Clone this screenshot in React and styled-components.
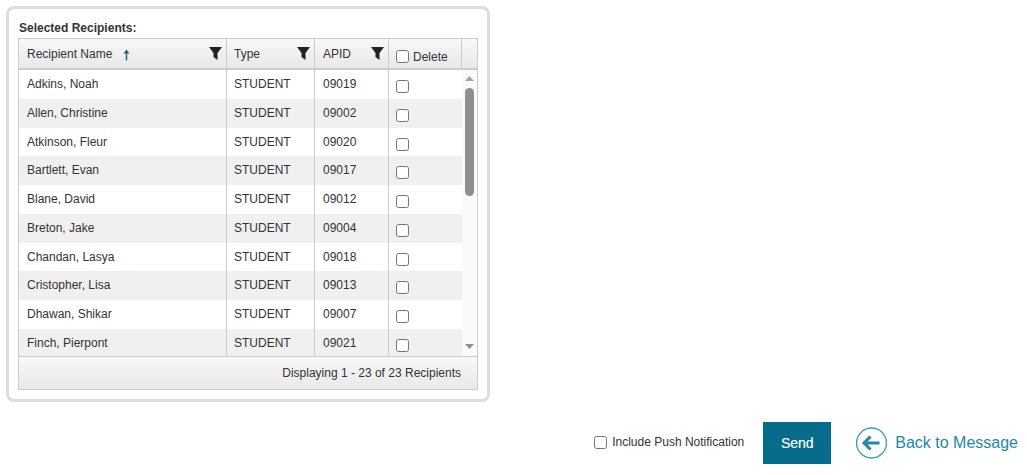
import React from "react";
import styled, { createGlobalStyle } from "styled-components";

const Global = createGlobalStyle`
  html, body { margin: 0; padding: 0; background: #fff; }
  body { font-family: "Liberation Sans", Arial, sans-serif; color: #333; font-size: 12px; }
`;

const Page = styled.div`
  width: 1027px;
  height: 475px;
  padding: 6px 0 0 6px;
  box-sizing: border-box;
  overflow: hidden;
`;

const Panel = styled.section`
  width: 484px;
  height: 396px;
  box-sizing: border-box;
  border: 3px solid #ddd;
  border-radius: 8px;
  padding: 12px 9px 9px;
`;

const Title = styled.h2`
  margin: 0;
  height: 17px;
  padding-left: 1px;
  font-size: 12px;
  line-height: 14px;
  font-weight: bold;
  color: #333;
`;

const Grid = styled.div`
  width: 460px;
  height: 352px;
  box-sizing: border-box;
  border: 1px solid #ccc;
  display: flex;
  flex-direction: column;
`;

const Header = styled.div`
  display: grid;
  grid-template-columns: 208px 88px 74px 73px 15px;
  height: 31px;
  flex: none;
  box-sizing: border-box;
  border-bottom: 2px solid #ccc;
  background: linear-gradient(#f7f7f7, #e9e9e9);
`;

const HeadCell = styled.div`
  position: relative;
  display: flex;
  align-items: center;
  gap: 10px;
  box-sizing: border-box;
  padding: 1px 0 0 ${p => p.$left}px;
  border-right: 1px solid #ccc;
  font-size: 12px;
  color: #333;
  &:last-child { border-right: 0; }
`;

const FilterIcon = styled.svg`
  position: absolute;
  right: 4px;
  top: 8px;
  width: 13px;
  height: 13px;
  fill: #222;
`;

const Filter = () => (
  <FilterIcon viewBox="0 0 13 13">
    <path d="M0 0h13L8.5 6v7L4.5 10V6z" />
  </FilterIcon>
);

const SortIcon = styled.svg`
  width: 7px;
  height: 12px;
  margin: 2px 0 0 1px;
`;

const Sort = () => (
  <SortIcon viewBox="0 0 7 12">
    <path d="M3.5 0.5 6.5 4.5H4.2V11.5H2.8V4.5H0.5z" fill="#24617e" />
  </SortIcon>
);

const DeleteLabel = styled.label`
  display: flex;
  align-items: center;
  gap: 4px;
  margin-top: 5px;
`;

const Check = styled.input.attrs({ type: "checkbox" })`
  width: 13px;
  height: 13px;
  margin: 0;
  flex: none;
`;

const Body = styled.div`
  position: relative;
  flex: 1;
  display: flex;
  overflow: hidden;
  border-bottom: 1px solid #ccc;
`;

const Rows = styled.div`
  width: 443px;
  flex: none;
`;

const Row = styled.div`
  display: grid;
  grid-template-columns: 208px 88px 74px 73px;
  height: 28.78px;
  background: ${p => (p.$alt ? "#f0f0f0" : "#fff")};
`;

const Cell = styled.div`
  display: flex;
  align-items: center;
  box-sizing: border-box;
  padding-left: ${p => p.$left}px;
  padding-bottom: 0.6px;
  border-right: 1px solid #ccc;
  font-size: 12px;
  color: #333;
  &:last-child { border-right: 0; }
`;

const RowCheck = styled(Check)`
  margin-top: 5px;
`;

const Scrollbar = styled.div`
  flex: 1;
  position: relative;
  background: #fafafa;
`;

const Arrow = styled.svg`
  position: absolute;
  left: 3px;
  width: 9px;
  height: 5px;
  fill: ${p => p.$fill};
  ${p => (p.$up ? "top: 6px;" : "bottom: 7px;")}
`;

const Thumb = styled.div`
  position: absolute;
  left: 3px;
  top: 18px;
  width: 9px;
  height: 108px;
  border-radius: 5px;
  background: #8f8f8f;
`;

const Footer = styled.div`
  flex: none;
  height: 32px;
  box-sizing: border-box;
  display: flex;
  align-items: center;
  justify-content: flex-end;
  padding: 0 16px 0 0;
  background: linear-gradient(#f7f7f7, #e9e9e9);
  font-size: 12px;
  color: #333;
`;

const Actions = styled.div`
  width: 1018px;
  margin-top: 20px;
  margin-left: -6px;
  height: 42px;
  display: flex;
  align-items: center;
  justify-content: flex-end;
`;

const PushLabel = styled.label`
  display: flex;
  align-items: center;
  gap: 5px;
  font-size: 12px;
  color: #333;
  margin: 0 19px 2px 0;
`;

const Send = styled.button`
  width: 68px;
  height: 42px;
  border: 0;
  padding: 0;
  background: #056d8b;
  color: #fff;
  font: 14px "Liberation Sans", Arial, sans-serif;
  -webkit-text-stroke: 0.15px #fff;
  margin-right: 25px;
`;

const Back = styled.a`
  display: flex;
  align-items: center;
  gap: 8px;
  color: #1e88a8;
  font-size: 16px;
  text-decoration: none;
`;

const BackIcon = styled.svg`
  width: 31px;
  height: 32px;
  flex: none;
`;

const data = [
  ["Adkins, Noah", "09019"],
  ["Allen, Christine", "09002"],
  ["Atkinson, Fleur", "09020"],
  ["Bartlett, Evan", "09017"],
  ["Blane, David", "09012"],
  ["Breton, Jake", "09004"],
  ["Chandan, Lasya", "09018"],
  ["Cristopher, Lisa", "09013"],
  ["Dhawan, Shikar", "09007"],
  ["Finch, Pierpont", "09021"],
];

export default function App() {
  return (
    <Page>
      <Global />
      <Panel>
        <Title>Selected Recipients:</Title>
        <Grid>
          <Header>
            <HeadCell $left={8}>Recipient Name <Sort /><Filter /></HeadCell>
            <HeadCell $left={7}>Type<Filter /></HeadCell>
            <HeadCell $left={8}>APID<Filter /></HeadCell>
            <HeadCell $left={7}><DeleteLabel><Check />Delete</DeleteLabel></HeadCell>
            <HeadCell />
          </Header>
          <Body>
            <Rows>
              {data.map(([name, id], i) => (
                <Row key={id} $alt={i % 2 === 1}>
                  <Cell $left={8}>{name}</Cell>
                  <Cell $left={7}>STUDENT</Cell>
                  <Cell $left={8}>{id}</Cell>
                  <Cell $left={7}><RowCheck /></Cell>
                </Row>
              ))}
            </Rows>
            <Scrollbar>
              <Arrow $up $fill="#a3a3a3" viewBox="0 0 9 5"><path d="M4.5 0 9 5H0z" /></Arrow>
              <Thumb />
              <Arrow $fill="#8f8f8f" viewBox="0 0 9 5"><path d="M0 0h9L4.5 5z" /></Arrow>
            </Scrollbar>
          </Body>
          <Footer>Displaying 1 - 23 of 23 Recipients</Footer>
        </Grid>
      </Panel>
      <Actions>
        <PushLabel><Check />Include Push Notification</PushLabel>
        <Send>Send</Send>
        <Back href="#">
          <BackIcon viewBox="0 0 31 32">
            <circle cx="15.5" cy="16" r="15" fill="none" stroke="#3f9dba" strokeWidth="1.4" />
            <path d="M14.5 9.5 8 16l6.5 6.5M8.5 16h15" fill="none" stroke="#2a86a4" strokeWidth="3" />
          </BackIcon>
          Back to Message
        </Back>
      </Actions>
    </Page>
  );
}
